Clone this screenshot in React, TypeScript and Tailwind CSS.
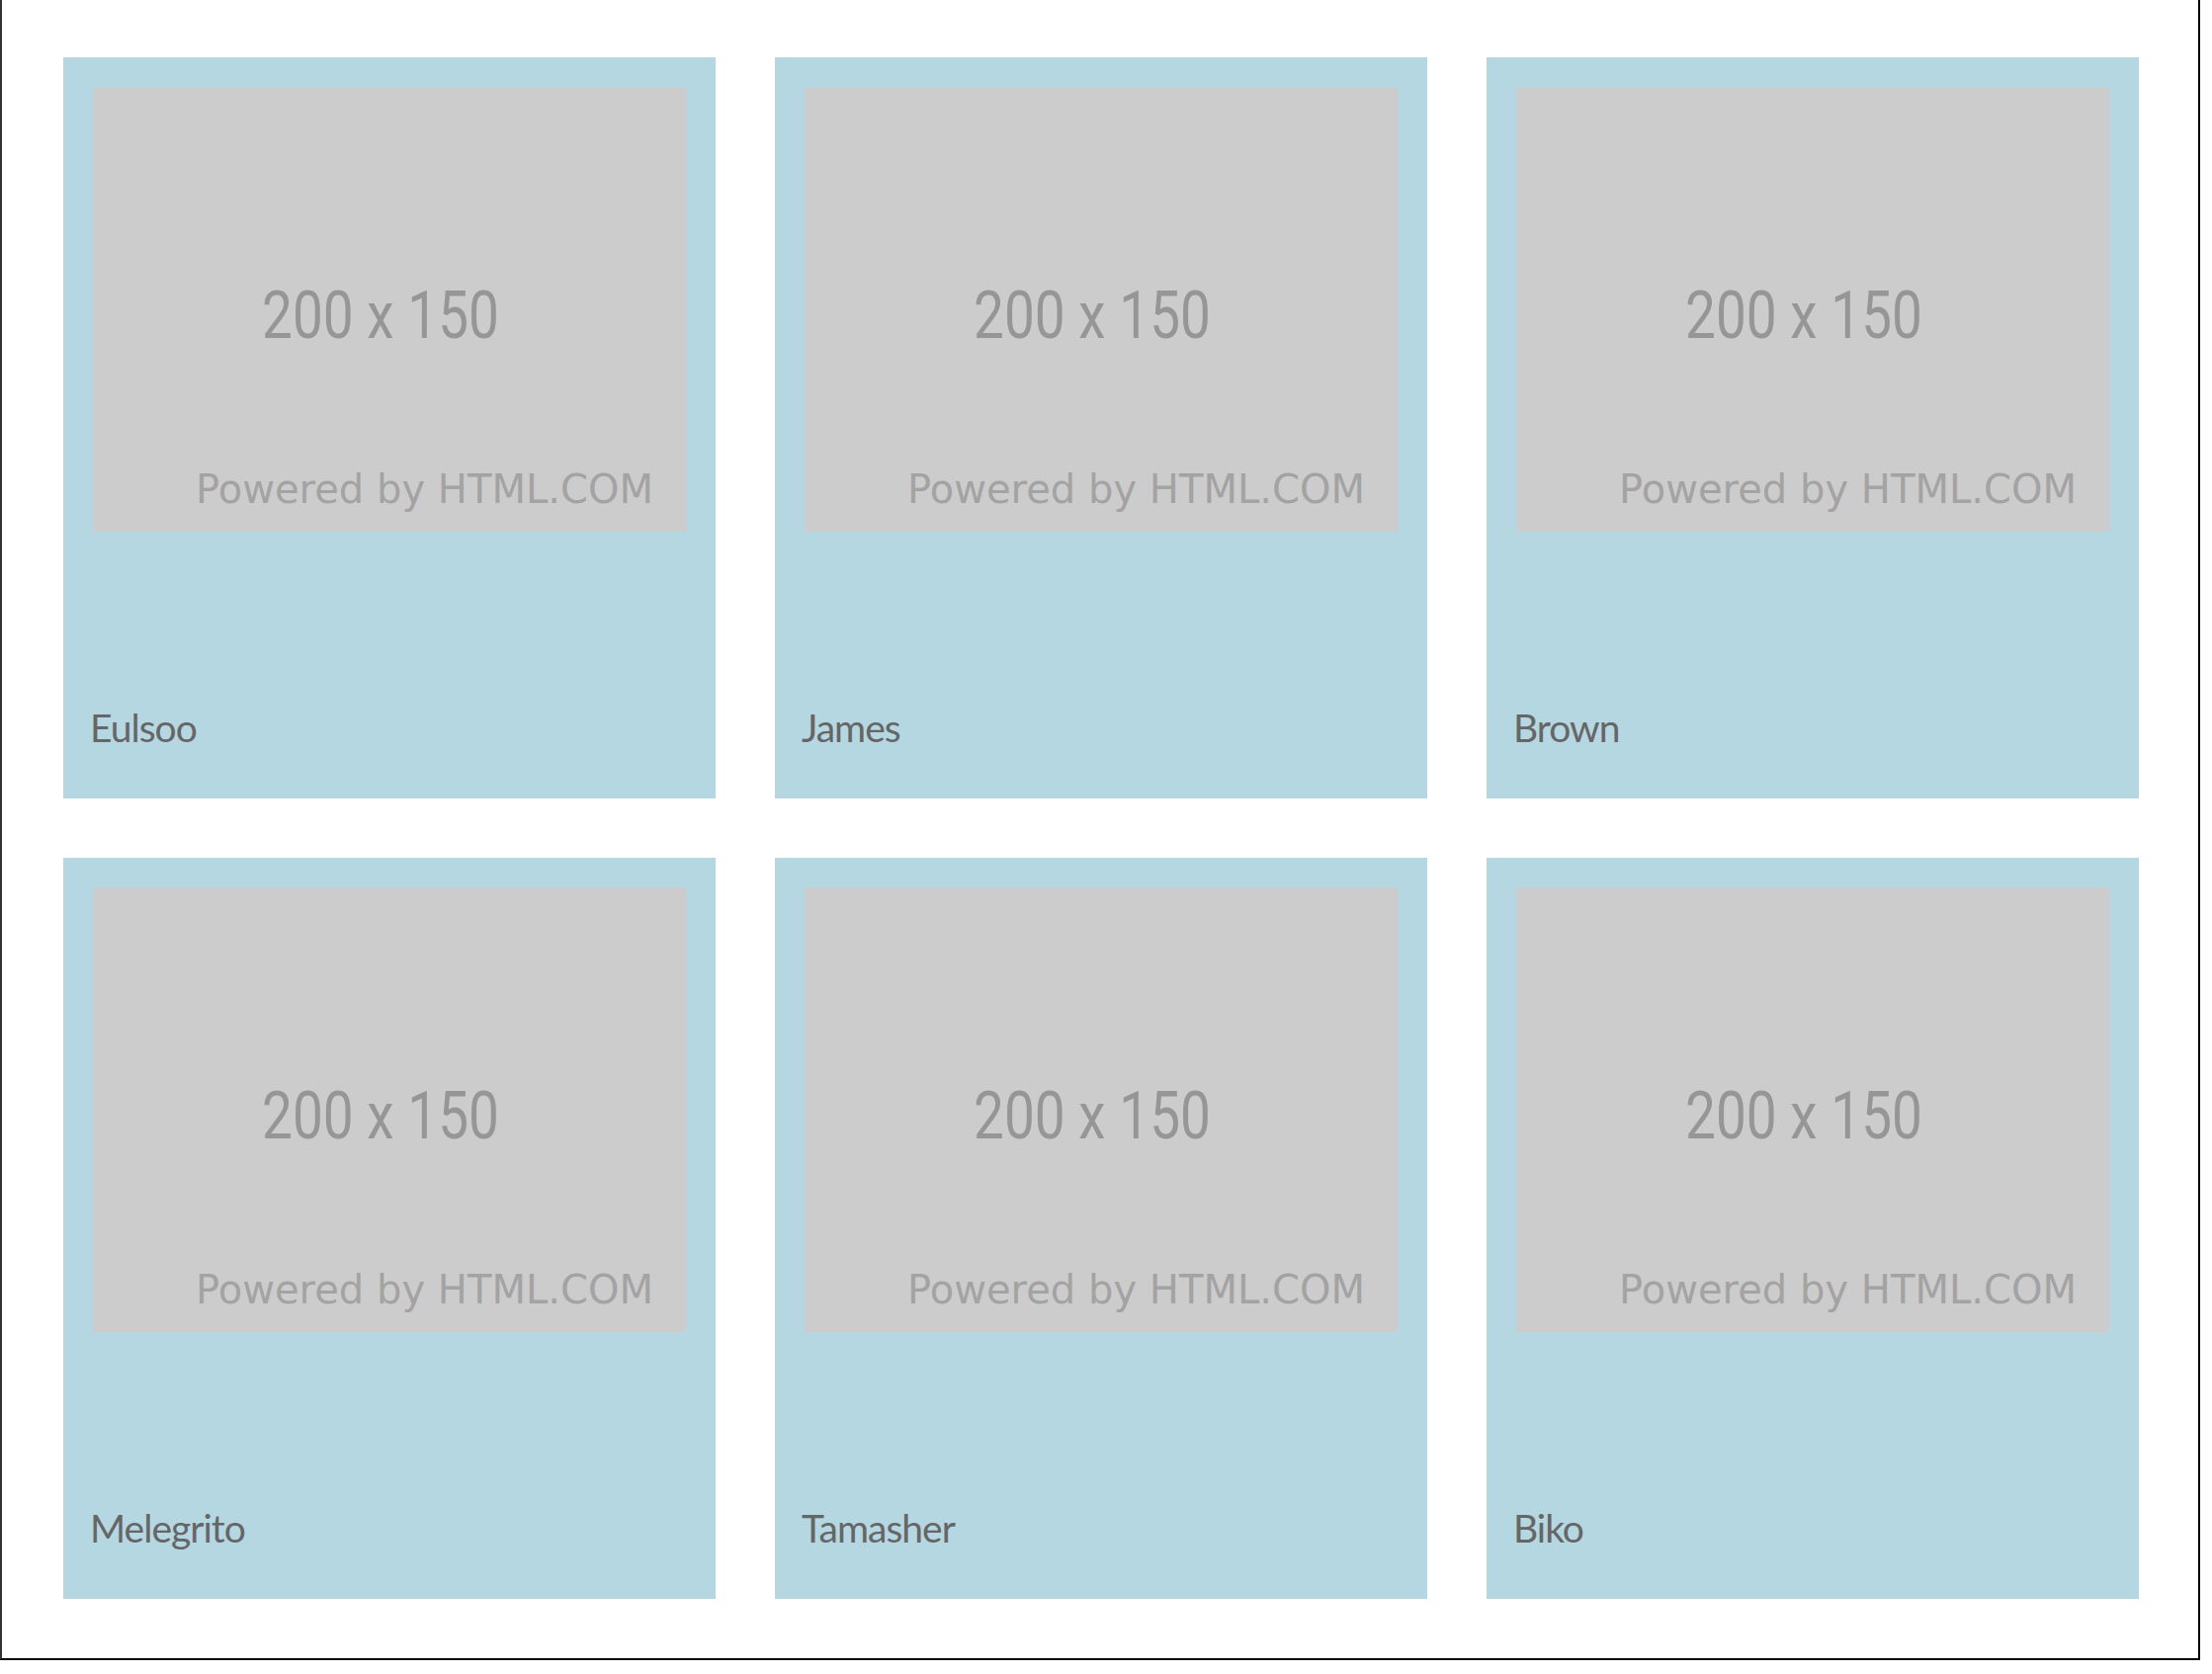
import React from "react";

const names = ["Eulsoo", "James", "Brown", "Melegrito", "Tamasher", "Biko"];

function Placeholder() {
  return (
    <svg width="600" height="450" viewBox="0 0 600 450" className="block">
      <rect x="0" y="0" width="600" height="450" fill="#cccccc" />
      <text
        x="171"
        y="254"
        fontFamily="Roboto, 'Liberation Sans', sans-serif"
        fontSize="67"
        fill="#969696"
        textLength="240"
        lengthAdjust="spacingAndGlyphs"
      >
        200 x 150
      </text>
      <text
        x="104"
        y="421"
        fontFamily="'DejaVu Sans', 'Liberation Sans', sans-serif"
        fontSize="40"
        fill="#a3a3a3"
        textLength="463"
        lengthAdjust="spacingAndGlyphs"
      >
        Powered by HTML.COM
      </text>
    </svg>
  );
}

function Card({ name }: { name: string }) {
  return (
    <div className="h-[750px] w-[660px] bg-[#b5d7e2] p-[30px] flex flex-col">
      <Placeholder />
      <div
        className="mt-[179px] -ml-[3px] text-[39px] leading-[39px] tracking-[-1px] text-[#666666]"
        style={{ fontFamily: "Lato, 'Open Sans', sans-serif" }}
      >
        {name}
      </div>
    </div>
  );
}

export default function App() {
  return (
    <div className="w-[2238px] h-[1694px] bg-white">
      <div className="w-[2226px] h-[1680px] border-x-2 border-b-2 border-black border-l-[#333333] pt-[58px] pl-[62px] pr-[60px]">
        <div className="grid grid-cols-[660px_660px_660px] gap-[60px]">
          {names.map((n) => (
            <Card key={n} name={n} />
          ))}
        </div>
      </div>
    </div>
  );
}
